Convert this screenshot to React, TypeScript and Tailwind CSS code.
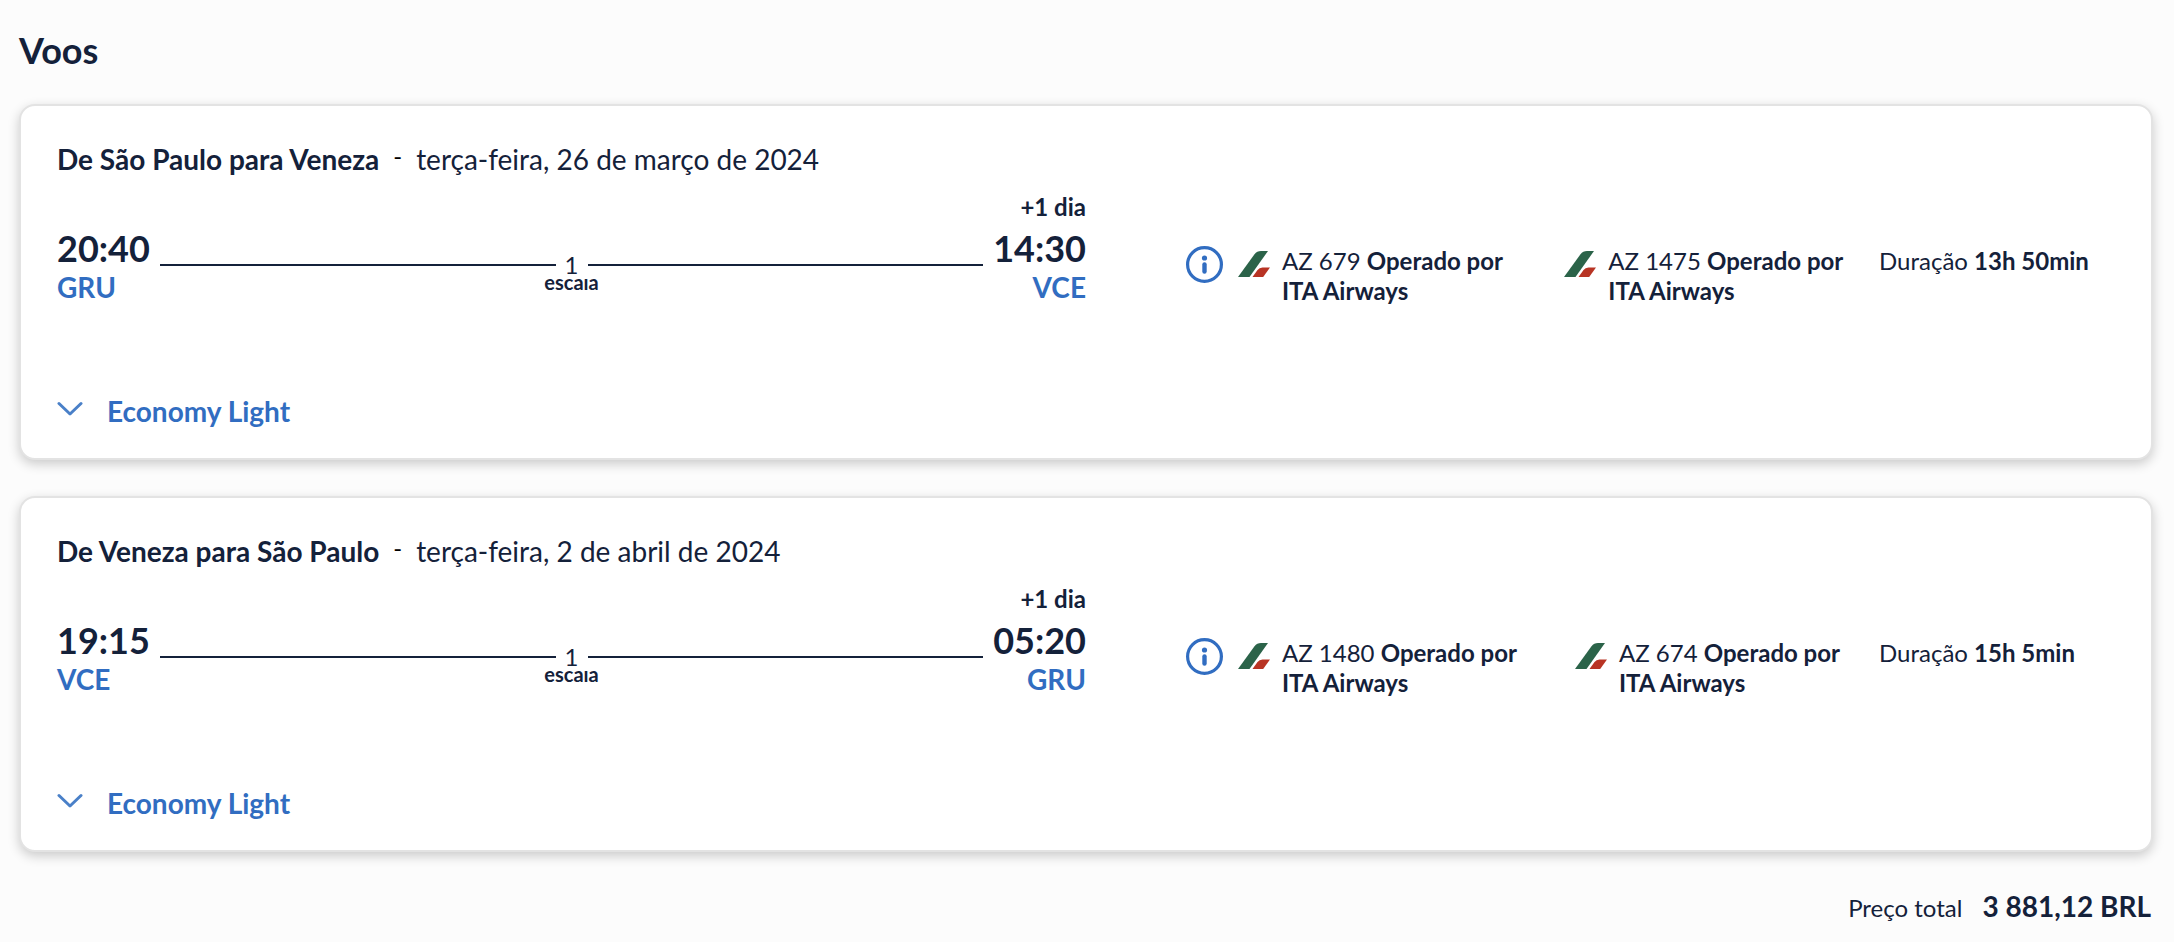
import { useState } from "react"

type Leg = { flight: string; carrier: string }

type Journey = {
  id: string
  title: string
  date: string
  from: { time: string; code: string }
  to: { time: string; code: string; shift: string }
  stops: number
  legs: Leg[]
  duration: string
  fare: string
}

const journeys: Journey[] = [
  {
    id: "outbound",
    title: "De São Paulo para Veneza",
    date: "terça-feira, 26 de março de 2024",
    from: { time: "20:40", code: "GRU" },
    to: { time: "14:30", code: "VCE", shift: "+1 dia" },
    stops: 1,
    legs: [
      { flight: "AZ 679", carrier: "ITA Airways" },
      { flight: "AZ 1475", carrier: "ITA Airways" },
    ],
    duration: "13h 50min",
    fare: "Economy Light",
  },
  {
    id: "inbound",
    title: "De Veneza para São Paulo",
    date: "terça-feira, 2 de abril de 2024",
    from: { time: "19:15", code: "VCE" },
    to: { time: "05:20", code: "GRU", shift: "+1 dia" },
    stops: 1,
    legs: [
      { flight: "AZ 1480", carrier: "ITA Airways" },
      { flight: "AZ 674", carrier: "ITA Airways" },
    ],
    duration: "15h 5min",
    fare: "Economy Light",
  },
]

export default function App() {
  return (
    <main className="min-h-screen bg-[#fcfcfc] pt-[30px] pr-[21px] pb-4 pl-[19px] font-['Lato',sans-serif] text-2xl text-[#14213a]">
      <h1 className="text-4xl leading-10 font-bold">Voos</h1>

      <div className="mt-[34px] flex flex-col gap-9">
        {journeys.map((j) => (
          <JourneyCard key={j.id} journey={j} />
        ))}
      </div>

      <div className="mt-[34px] flex items-baseline justify-end gap-5 pr-0.5 leading-10">
        <span>Preço total</span>
        <strong className="text-[28px] leading-10">3 881,12 BRL</strong>
      </div>
    </main>
  )
}

function JourneyCard({ journey }: { journey: Journey }) {
  const [open, setOpen] = useState(false)
  const { from, to, legs } = journey

  return (
    <section className="rounded-2xl border-2 border-[#e3e3e3] bg-white px-9 pt-[33px] pb-[27px] shadow-[0_4px_12px_rgba(0,0,0,0.2)]">
      <div className="flex items-center text-[28px] leading-10">
        <h2 className="font-bold">{journey.title}</h2>
        <span className="mx-3.5 pb-1.5 text-2xl leading-8 text-black">-</span>
        <span>{journey.date}</span>
      </div>

      <div className="mt-2 grid grid-cols-2">
        {/* times and route line */}
        <div className="flex gap-2.5">
          <div className="flex flex-col items-start justify-end">
            <Time>{from.time}</Time>
            <AirportLink code={from.code} />
          </div>
          <div className="flex flex-1 items-start pt-16">
            <div className="flex h-7 flex-1 items-center">
              <div className="h-0.5 flex-1 bg-[#14213a]" />
              <div className="flex h-7 w-8 flex-col items-center">
                <span className="leading-7">{journey.stops}</span>
                {/* short line box trims the top of the label under the number */}
                <span className="h-4 shrink-0 overflow-hidden text-xl leading-[7px] font-bold">
                  escala
                </span>
              </div>
              <div className="h-0.5 flex-1 bg-[#14213a]" />
            </div>
          </div>
          <div className="flex flex-col items-end justify-end">
            <span className="mb-px leading-10 font-bold">{to.shift}</span>
            <Time>{to.time}</Time>
            <AirportLink code={to.code} />
          </div>
        </div>

        {/* operating flights */}
        <div className="flex items-start pt-[59px] pl-[100px] leading-[30px]">
          <div className="flex min-w-0 flex-1">
            {legs.map((leg, i) => (
              <div key={leg.flight} className="flex min-w-0 items-start">
                {i === 0 && (
                  <button type="button" aria-label="Detalhes do voo" className="mr-[15px] shrink-0">
                    <InfoIcon />
                  </button>
                )}
                <ItaMark />
                <p className="ml-3">
                  {leg.flight} <strong>Operado por {leg.carrier}</strong>
                </p>
                {i < legs.length - 1 && <div className="w-[45px] shrink-0" />}
              </div>
            ))}
          </div>
          <p className="w-[236px] shrink-0">
            Duração <strong>{journey.duration}</strong>
          </p>
        </div>
      </div>

      <button
        type="button"
        aria-expanded={open}
        onClick={() => setOpen(!open)}
        className="mt-[85px] flex items-center gap-6 text-[28px] leading-10 font-bold text-[#316dc1]"
      >
        <Chevron />
        {journey.fare}
      </button>
    </section>
  )
}

function Time({ children }: { children: React.ReactNode }) {
  return <span className="text-4xl leading-10 font-bold">{children}</span>
}

function AirportLink({ code }: { code: string }) {
  return (
    <a href={`#${code}`} className="text-[28px] leading-[38px] font-bold text-[#316dc1]">
      {code}
    </a>
  )
}

function InfoIcon() {
  return (
    <svg viewBox="0 0 37 37" className="block size-[37px]" aria-hidden="true">
      <circle cx="18.5" cy="18.5" r="16.900" fill="none" stroke="#316dc1" strokeWidth="3.200" />
      <circle cx="18.5" cy="12" r="2.600" fill="#316dc1" />
      <path d="M18.5 18.5v7" stroke="#316dc1" strokeWidth="4.400" strokeLinecap="round" />
    </svg>
  )
}

function ItaMark() {
  return (
    <svg viewBox="0 0 32 26" className="mt-[5px] h-[26px] w-8 shrink-0" aria-hidden="true">
      <path d="M0 26 16.500 3.200Q19 0 23 0h7L11.500 26Z" fill="#2b6349" />
      <path d="M14.500 26 19.500 19Q21.300 16.500 24.500 16.500H32L25.200 26Z" fill="#b83424" />
    </svg>
  )
}

function Chevron() {
  return (
    <svg viewBox="0 0 26 16" className="mb-1 h-4 w-[26px]" fill="none" aria-hidden="true">
      <path
        d="m2 2.500 11 10.500 11-10.500"
        stroke="#4a80c8"
        strokeWidth="3"
        strokeLinecap="round"
        strokeLinejoin="round"
      />
    </svg>
  )
}
